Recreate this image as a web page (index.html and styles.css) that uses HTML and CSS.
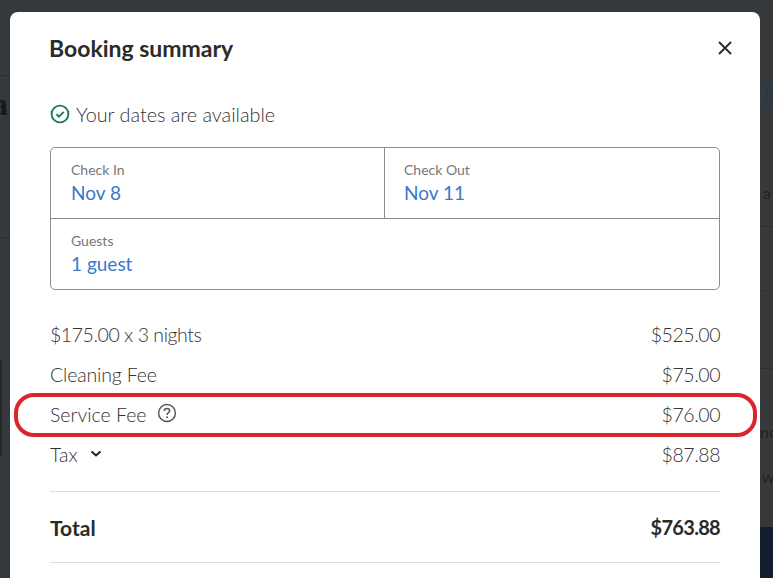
FILE: index.html
```html
<!DOCTYPE html>
<html lang="en">
<head>
    <meta charset="UTF-8">
    <meta name="viewport" content="width=device-width, initial-scale=1.0">
    <title>Booking summary</title>
    <link rel="stylesheet" href="styles.css">
</head>
<body>
    <!-- page dimmed behind the modal -->
    <div class="backdrop">
        <span class="bg-line bg-line-left1"></span>
        <span class="bg-line bg-line-left2"></span>
        <span class="bg-line bg-line-right1"></span>
        <span class="bg-line bg-line-right2"></span>
        <span class="bg-line bg-line-right3"></span>
        <span class="bg-text bg-heading">a</span>
        <span class="bg-text bg-link">R</span>
        <span class="bg-text bg-a">a</span>
        <span class="bg-text bg-no">no</span>
        <span class="bg-text bg-w">w</span>
        <span class="bg-panel"></span>
        <span class="bg-footer"></span>
    </div>

    <div class="modal">
        <div class="modal-header">
            <h1>Booking summary</h1>
            <svg class="close-icon" width="14" height="14" viewBox="0 0 14 14">
                <path d="M1 1L13 13M13 1L1 13" stroke="#2b2b2b" stroke-width="1.9" fill="none"/>
            </svg>
        </div>

        <div class="available">
            <svg width="20" height="20" viewBox="0 0 20 20">
                <circle cx="10" cy="10" r="8.4" stroke="#1f7a5c" stroke-width="1.9" fill="none"/>
                <path d="M6.4 10.2L9 12.7L13.7 7.8" stroke="#1f7a5c" stroke-width="1.9" fill="none"/>
            </svg>
            <span>Your dates are available</span>
        </div>

        <div class="dates-box">
            <div class="dates-row">
                <div class="field field-left">
                    <div class="field-label">Check In</div>
                    <div class="field-value">Nov 8</div>
                </div>
                <div class="field field-right">
                    <div class="field-label">Check Out</div>
                    <div class="field-value">Nov 11</div>
                </div>
            </div>
            <div class="field field-guests">
                <div class="field-label">Guests</div>
                <div class="field-value">1 guest</div>
            </div>
        </div>

        <div class="prices">
            <div class="price-row"><span class="amount">$175.00 x 3 nights</span><span class="amount">$525.00</span></div>
            <div class="price-row"><span class="label-tight">Cleaning Fee</span><span class="amount">$75.00</span></div>
            <div class="price-row">
                <span class="with-icon">Service Fee
                    <svg class="help-icon" width="20" height="20" viewBox="0 0 20 20">
                        <circle cx="10" cy="10" r="8.4" stroke="#555" stroke-width="1.5" fill="none"/>
                        <path d="M7.3 7.9C7.3 6.3 8.5 5.4 10 5.4C11.6 5.4 12.7 6.3 12.7 7.7C12.7 9.6 10 9.7 10 11.9" stroke="#555" stroke-width="1.5" fill="none"/>
                        <circle cx="10" cy="14.3" r="1" fill="#555"/>
                    </svg>
                </span>
                <span class="amount">$76.00</span>
            </div>
            <div class="price-row">
                <span class="with-icon tax">Tax
                    <svg width="12" height="8" viewBox="0 0 12 8">
                        <path d="M1.5 1.5L6 5.5L10.5 1.5" stroke="#222" stroke-width="1.9" fill="none"/>
                    </svg>
                </span>
                <span class="amount">$87.88</span>
            </div>
        </div>

        <div class="total-row"><span>Total</span><span class="total-amount">$763.88</span></div>
    </div>

    <!-- annotation drawn over the screenshot -->
    <div class="highlight"></div>
</body>
</html>
```
FILE: styles.css
```css
body {
    margin: 0;
    height: 578px;
    overflow: hidden;
    position: relative;
    background-color: #36393b;
    font-family: "Lato", "Open Sans", sans-serif;
    font-weight: 300;
    color: #333;
}
.backdrop {
    position: absolute;
    top: 0;
    left: 0;
    width: 773px;
    height: 578px;
    overflow: hidden;
}
.bg-line {
    position: absolute;
    height: 1px;
    background-color: #2c2e30;
}
.bg-line-left1 { left: 0; width: 10px; top: 75px; }
.bg-line-left2 { left: 0; width: 10px; top: 237px; }
.bg-line-right1 { left: 760px; width: 13px; top: 226px; }
.bg-line-right2 { left: 760px; width: 13px; top: 368px; }
.bg-line-right3 { left: 760px; width: 13px; top: 290px; background-color: #2f3133; }
.bg-text {
    position: absolute;
    line-height: 1;
    font-weight: 400;
}
.bg-heading {
    left: -8px;
    top: 88px;
    font-family: "Liberation Serif", serif;
    font-weight: bold;
    font-size: 32px;
    color: #17191b;
}
.bg-link {
    left: 764px;
    top: 87px;
    font-size: 16px;
    color: #24344a;
}
.bg-a {
    left: 763px;
    top: 185px;
    font-size: 16px;
    color: #222;
}
.bg-no {
    left: 760px;
    top: 424px;
    font-size: 16px;
    color: #222;
}
.bg-w {
    left: 762px;
    top: 469px;
    font-size: 16px;
    color: #222;
}
.bg-panel {
    position: absolute;
    left: 0;
    top: 360px;
    width: 2px;
    height: 96px;
    background-color: #26292b;
}
.bg-footer {
    position: absolute;
    left: 760px;
    top: 527px;
    width: 13px;
    height: 51px;
    background-color: #121e2f;
}
.modal {
    position: absolute;
    left: 10px;
    top: 12px;
    width: 750px;
    height: 566px;
    overflow: hidden;
    box-sizing: border-box;
    padding: 0 40px;
    background-color: #fff;
    border-radius: 8px 8px 0 0;
}
.modal-header {
    display: flex;
    justify-content: space-between;
    align-items: center;
    height: 72px;
}
.modal-header h1 {
    margin: 0 0 0 -1px;
    font-size: 23px;
    font-weight: bold;
    color: #2b2b2b;
}
.close-icon {
    margin-right: -12px;
}
.available {
    display: flex;
    align-items: center;
    gap: 6px;
    margin-top: 17px;
    height: 26px;
    font-size: 19.8px;
}
.dates-box {
    margin-top: 20px;
    border: 1px solid #8c8c8c;
    border-radius: 5px;
}
.dates-row {
    display: flex;
    border-bottom: 1px solid #8c8c8c;
}
.field {
    flex: 1;
    height: 70px;
    box-sizing: border-box;
    padding: 13px 20px 0;
}
.field-left {
    flex: none;
    width: 334px;
    border-right: 1px solid #8c8c8c;
}
.field-right {
    padding-left: 19px;
}
.field-label {
    font-size: 14px;
    line-height: 18px;
    font-weight: 400;
    color: #777;
}
.field-value {
    font-size: 19px;
    line-height: 28px;
    font-weight: 400;
    color: #3a78c9;
}
.prices {
    margin-top: 24px;
    border-bottom: 1px solid #dcdcdc;
    padding-bottom: 17px;
}
.price-row {
    display: flex;
    justify-content: space-between;
    align-items: center;
    height: 40px;
    font-size: 19.5px;
}
.amount {
    letter-spacing: -0.45px;
}
.label-tight {
    letter-spacing: -0.15px;
}
.with-icon {
    display: flex;
    align-items: center;
    gap: 10px;
}
.help-icon {
    margin-top: -2px;
}
.tax {
    gap: 12px;
}
.total-row {
    display: flex;
    justify-content: space-between;
    align-items: center;
    height: 70px;
    font-size: 21px;
    font-weight: bold;
    color: #2b2b2b;
    border-bottom: 1px solid #dcdcdc;
}
.total-amount {
    font-size: 20px;
    letter-spacing: -0.7px;
}
.highlight {
    position: absolute;
    left: 14px;
    top: 393px;
    width: 743px;
    height: 44px;
    box-sizing: border-box;
    border: 4px solid #dc2430;
    border-radius: 20px;
}
```
